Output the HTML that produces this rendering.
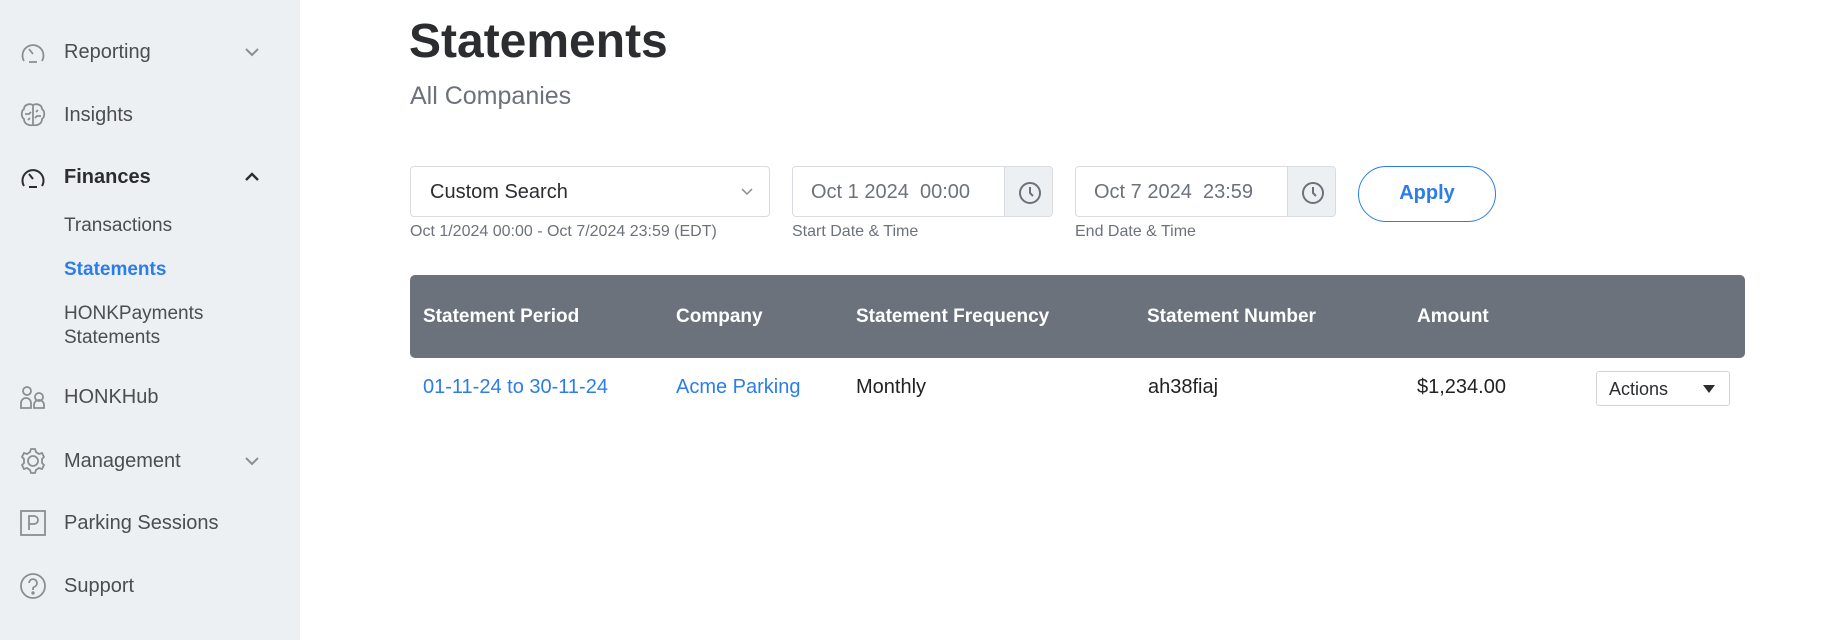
<!DOCTYPE html>
<html><head><meta charset="utf-8"><style>
*{box-sizing:border-box;margin:0;padding:0}
body{width:1838px;height:640px;overflow:hidden;background:#fff;font-family:"Liberation Sans",sans-serif;position:relative}
.side{position:absolute;left:0;top:0;width:300px;height:640px;background:#edf0f3}
.it{position:absolute;left:0;width:300px;height:30px;display:flex;align-items:center;font-size:20px;color:#4a4d52}
.it svg.ic{position:absolute;left:19px;width:28px;height:28px}
.it span{position:absolute;left:64px}
.it .chev{position:absolute;left:242px;width:20px;height:20px}
.sub{position:absolute;left:64px;font-size:19px;color:#4a4d52;line-height:24px}
.a{position:absolute}
.lbl{font-size:16px;color:#6c727b}
.inp{position:absolute;border:1px solid #d8dbe0;border-radius:4px;background:#fff}
.hd{position:absolute;left:410px;top:275px;width:1335px;height:83px;background:#6c727b;border-radius:5px}
.hd div{position:absolute;top:31px;color:#fff;font-weight:bold;font-size:19px}
.rw{position:absolute;top:376px;font-size:20px;color:#222}
.blue{color:#2b7de9}
</style></head><body>
<div class="side">
 <div class="it" style="top:37px"><svg class="ic" viewBox="0 0 28 28" fill="none" stroke="#8a8e94" stroke-width="1.8"><path d="M5 23 A10.5 10.5 0 1 1 23 23"/><path d="M10 24h8M10 11l4 5"/></svg><span>Reporting</span><svg class="chev" viewBox="0 0 20 20" fill="none" stroke="#8a8e94" stroke-width="2"><path d="M4 7l6 6 6-6"/></svg></div>
 <div class="it" style="top:100px"><svg class="ic" viewBox="0 0 28 28" fill="none" stroke="#8a8e94" stroke-width="1.8"><path d="M14 4v20M14 4c-4-2-9 0-9 4-3 2-3 8 0 10 0 5 5 7 9 6M14 4c4-2 9 0 9 4 3 2 3 8 0 10 0 5-5 7-9 6M6 13h4l2-2M22 15h-4l-2 2M9 19l2-2M19 9l-2 2"/></svg><span>Insights</span></div>
 <div class="it" style="top:162px"><svg class="ic" viewBox="0 0 28 28" fill="none" stroke="#2b2d30" stroke-width="2"><path d="M5 23 A10.5 10.5 0 1 1 23 23"/><path d="M10 24h8M10 11l4 5"/></svg><span style="font-weight:bold;color:#2b2d30">Finances</span><svg class="chev" viewBox="0 0 20 20" fill="none" stroke="#2b2d30" stroke-width="2.4"><path d="M4 13l6-6 6 6"/></svg></div>
 <div class="sub" style="top:214px">Transactions</div>
 <div class="sub" style="top:258px;color:#2b7de9;font-weight:bold">Statements</div>
 <div class="sub" style="top:302px">HONKPayments<br>Statements</div>
 <div class="it" style="top:382px"><svg class="ic" viewBox="0 0 28 28" fill="none" stroke="#8a8e94" stroke-width="1.8"><circle cx="8" cy="8" r="4"/><path d="M2 25v-5a5 5 0 0 1 10 0v5zM15 25v-3a5 5 0 0 1 10 0v3z"/><circle cx="20" cy="14" r="4"/></svg><span>HONKHub</span></div>
 <div class="it" style="top:446px"><svg class="ic" viewBox="0 0 28 28" fill="none" stroke="#8a8e94" stroke-width="1.8"><circle cx="14" cy="14" r="5"/><path d="M12 2h4l1 3 3 2 3-1 2 4-2 2v4l2 2-2 4-3-1-3 2-1 3h-4l-1-3-3-2-3 1-2-4 2-2v-4l-2-2 2-4 3 1 3-2z"/></svg><span>Management</span><svg class="chev" viewBox="0 0 20 20" fill="none" stroke="#8a8e94" stroke-width="2"><path d="M4 7l6 6 6-6"/></svg></div>
 <div class="it" style="top:508px"><svg class="ic" viewBox="0 0 28 28" fill="none" stroke="#8a8e94" stroke-width="1.8"><rect x="2" y="2" width="24" height="24"/><path d="M10 21V7h5a4 4 0 0 1 0 8h-5"/></svg><span>Parking Sessions</span></div>
 <div class="it" style="top:571px"><svg class="ic" viewBox="0 0 28 28" fill="none" stroke="#8a8e94" stroke-width="1.8"><circle cx="14" cy="14" r="12"/><path d="M10 11a4 4 0 1 1 5 4c-1 .5-1 1-1 3"/><circle cx="14" cy="21" r=".8" fill="#8a8e94"/></svg><span>Support</span></div>
</div>

<div class="a" style="left:409px;top:14px;font-size:48px;font-weight:bold;color:#2b2d30">Statements</div>
<div class="a" style="left:410px;top:82px;font-size:25px;color:#6c727b">All Companies</div>

<div class="inp" style="left:410px;top:166px;width:360px;height:51px"><span class="a" style="left:19px;top:14px;font-size:20px;color:#2b2d30">Custom Search</span><svg class="a" style="left:329px;top:20px" width="14" height="10" viewBox="0 0 14 10" fill="none" stroke="#8a8e94" stroke-width="1.5"><path d="M2 2l5 5 5-5"/></svg></div>
<div class="a lbl" style="left:410px;top:223px">Oct 1/2024 00:00 - Oct 7/2024 23:59 (EDT)</div>

<div class="inp" style="left:792px;top:166px;width:261px;height:51px;overflow:hidden"><span class="a" style="left:18px;top:14px;font-size:20px;color:#6c727b;white-space:pre">Oct 1 2024  00:00</span><div class="a" style="left:211px;top:0;width:50px;height:51px;background:#edf0f3;border-left:1px solid #d8dbe0"><svg class="a" style="left:13px;top:14px" width="24" height="24" viewBox="0 0 24 24" fill="none" stroke="#6c727b" stroke-width="2"><circle cx="12" cy="12" r="10"/><path d="M12 6v6l3 3"/></svg></div></div>
<div class="a lbl" style="left:792px;top:223px">Start Date &amp; Time</div>

<div class="inp" style="left:1075px;top:166px;width:261px;height:51px;overflow:hidden"><span class="a" style="left:18px;top:14px;font-size:20px;color:#6c727b;white-space:pre">Oct 7 2024  23:59</span><div class="a" style="left:211px;top:0;width:50px;height:51px;background:#edf0f3;border-left:1px solid #d8dbe0"><svg class="a" style="left:13px;top:14px" width="24" height="24" viewBox="0 0 24 24" fill="none" stroke="#6c727b" stroke-width="2"><circle cx="12" cy="12" r="10"/><path d="M12 6v6l3 3"/></svg></div></div>
<div class="a lbl" style="left:1075px;top:223px">End Date &amp; Time</div>

<div class="a" style="left:1358px;top:166px;width:138px;height:56px;border:1.5px solid #2b7de9;border-radius:28px;color:#2b7de9;font-size:20px;font-weight:bold;text-align:center;line-height:53px">Apply</div>

<div class="hd">
 <div style="left:13px">Statement Period</div>
 <div style="left:266px">Company</div>
 <div style="left:446px">Statement Frequency</div>
 <div style="left:737px">Statement Number</div>
 <div style="left:1007px">Amount</div>
</div>
<div class="rw blue" style="left:423px">01-11-24 to 30-11-24</div>
<div class="rw blue" style="left:676px">Acme Parking</div>
<div class="rw" style="left:856px">Monthly</div>
<div class="rw" style="left:1148px">ah38fiaj</div>
<div class="rw" style="left:1417px">$1,234.00</div>
<div class="a" style="left:1596px;top:371px;width:134px;height:35px;border:1px solid #d0d4d9;border-radius:3px;font-size:18px;color:#2b2d30;padding:7px 0 0 12px">Actions<svg class="a" style="left:106px;top:13px" width="12" height="8" viewBox="0 0 12 8"><path d="M0 0h12L6 8z" fill="#2b2d30"/></svg></div>
</body></html>
